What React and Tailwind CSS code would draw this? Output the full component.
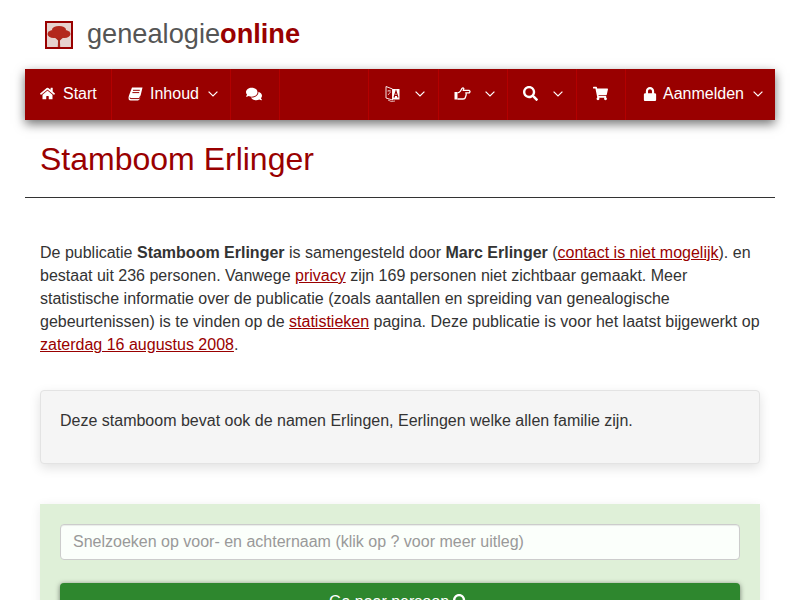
import { FaHome, FaComments, FaSearch, FaShoppingCart, FaLock } from "react-icons/fa";

const Chevron = () => (
  <svg width="10" height="6" viewBox="0 0 10 6" fill="none" stroke="currentColor" strokeWidth="1.2" className="shrink-0">
    <path d="M0.6 0.6 L5 5 L9.4 0.6" />
  </svg>
);

// translate icon: open book with an A on the right page
const LangIcon = () => (
  <svg width="15" height="18" viewBox="0 0 15 18" className="shrink-0">
    <path d="M1 1.5 L7.5 4 V15 L1 13 Z" fill="none" stroke="#fff" strokeWidth="0.9" />
    <path d="M7.5 4 H14.5 V14.5 H7.5 Z" fill="#fff" />
    <path d="M9 12.5 L11 6 L13 12.5 M9.8 10.5 H12.2" fill="none" stroke="#990000" strokeWidth="1.1" />
    <path d="M2.5 6 H6 M4 5 V6 M3 10 L5.5 7" fill="none" stroke="#fff" strokeWidth="0.7" />
    <path d="M3 15 Q6 17.5 10 16" fill="none" stroke="#fff" strokeWidth="0.7" />
  </svg>
);

const BookIcon = () => (
  <svg width="15" height="14" viewBox="0 0 15 14" className="shrink-0">
    <path d="M4 0.5 H14.5 L12 11 Q11.5 13 10 13.5 H2.5 Q0.4 13.5 0.5 11 Q0.5 10 1 8.5 Z" fill="#fff" />
    <path d="M5 3.3 H11.8 M4.4 5.6 H11.2" stroke="#990000" strokeWidth="1" />
    <path d="M12.6 8.8 L11.4 11.6 H3 Q1.8 11.6 2 10.6" fill="none" stroke="#990000" strokeWidth="1" />
  </svg>
);

const HandIcon = () => (
  <svg width="17" height="13" viewBox="0 0 17 13" className="shrink-0">
    <path d="M0.5 5 H3.5 V12.5 H0.5 Z" fill="#fff" />
    <path d="M3.5 5.8 Q5.5 5.6 6.5 4 L8 1.5 Q9 0.4 9.8 1.6 L9.3 3.4 H15 Q16.8 4.2 15.4 5.8 H12 Q12.6 8 11.6 9.6 Q11.2 12 9 12 H3.5" fill="none" stroke="#fff" strokeWidth="1.3" />
  </svg>
);

const TreeLogo = () => (
  <div className="w-[28px] h-[28px] border-2 border-[#990000] bg-[#e6d2ce] shrink-0">
    <svg width="24" height="24" viewBox="0 0 24 24" className="block blur-[0.4px]">
      <path d="M11.2 14 H12.8 L13.2 24 H10.8 Z" fill="#a5281c" />
      <path d="M8.5 15 L12 18.5 L15.5 15 Z" fill="#a5281c" />
      <ellipse cx="12" cy="6.5" rx="7" ry="3.5" fill="#b3281c" />
      <ellipse cx="6.5" cy="11" rx="6" ry="4" fill="#b3281c" />
      <ellipse cx="17.5" cy="11" rx="6" ry="4" fill="#b3281c" />
      <ellipse cx="12" cy="11" rx="8" ry="4.5" fill="#b3281c" />
    </svg>
  </div>
);

function NavItem({ className, children, last }) {
  return (
    <div className={`${className} h-full flex items-center pb-[2px] text-white ${last ? "" : "border-r border-[#b30000]"}`}>
      {children}
    </div>
  );
}

function App() {
  const linkClass = "text-[#990000] underline";
  return (
    <div className="h-screen overflow-hidden bg-white text-[#333333] font-['Liberation_Sans',Arial,sans-serif] text-base leading-[23px]">
      <div className="mx-[25px]">
        {/* Logo */}
        <div className="h-[69px] flex items-center pl-5 gap-[14px]">
          <TreeLogo />
          <div className="text-[27.2px] text-[#555555] leading-none pb-[2px]">
            genealogie<span className="font-bold text-[#990000]">online</span>
          </div>
        </div>

        {/* Nav */}
        <div className="h-[51px] bg-[#990000] flex shadow-[0_4px_10px_rgba(0,0,0,0.55)]">
          <NavItem className="w-[87px] pl-[15px] gap-2">
            <FaHome size={15} /> <span>Start</span>
          </NavItem>
          <NavItem className="w-[119px] pl-4 gap-[7px]">
            <BookIcon /> <span>Inhoud</span> <span className="ml-[2px]"><Chevron /></span>
          </NavItem>
          <NavItem className="w-[49px] pl-[15px]">
            <FaComments size={16} />
          </NavItem>
          <NavItem className="w-[89px]" />
          <NavItem className="w-[70px] pl-4 gap-[15px]">
            <LangIcon /><Chevron />
          </NavItem>
          <NavItem className="w-[69px] pl-[15px] gap-[14px]">
            <HandIcon /><Chevron />
          </NavItem>
          <NavItem className="w-[69px] pl-[15px] gap-[15px]">
            <FaSearch size={15} /><Chevron />
          </NavItem>
          <NavItem className="w-[49px] pl-4">
            <FaShoppingCart size={15} />
          </NavItem>
          <NavItem className="flex-1 pl-[17px] gap-[6px]" last>
            <FaLock size={14} /> <span>Aanmelden</span> <span className="ml-[3px]"><Chevron /></span>
          </NavItem>
        </div>

        {/* Title */}
        <h1 className="text-[32px] leading-[35px] text-[#990000] pl-[15px] pt-[22px] pb-[20px] border-b border-[#333333]">
          Stamboom Erlinger
        </h1>

        {/* Intro */}
        <p className="px-[15px] mt-[43px]">
          De publicatie <b>Stamboom Erlinger</b> is samengesteld door <b>Marc Erlinger</b> (<a className={linkClass}>contact is niet mogelijk</a>). en bestaat uit 236 personen. Vanwege <a className={linkClass}>privacy</a> zijn 169 personen niet zichtbaar gemaakt. Meer statistische informatie over de publicatie (zoals aantallen en spreiding van genealogische gebeurtenissen) is te vinden op de <a className={linkClass}>statistieken</a> pagina. Deze publicatie is voor het laatst bijgewerkt op <a className={linkClass}>zaterdag 16 augustus 2008</a>.
        </p>

        {/* Note */}
        <div className="mx-[15px] mt-[34px] h-[74px] bg-[#f5f5f5] border border-[#e3e3e3] rounded px-[19px] pt-[18px] shadow-[0_4px_12px_rgba(0,0,0,0.12)]">
          Deze stamboom bevat ook de namen Erlingen, Eerlingen welke allen familie zijn.
        </div>

        {/* Search */}
        <div className="mx-[15px] mt-[40px] bg-[#dff0d8] px-5 pt-5 pb-5 shadow-[0_2px_10px_rgba(0,0,0,0.08)]">
          <input
            placeholder="Snelzoeken op voor- en achternaam (klik op ? voor meer uitleg)"
            className="w-full h-[36px] bg-[#fbfffb] border border-[#cccccc] rounded px-3 text-base text-[#555555] placeholder:text-[#999999] shadow-[inset_0_1px_1px_rgba(0,0,0,0.075)] block"
          />
          <button className="mt-[23px] w-full h-[36px] pr-[3px] bg-[#2e872e] rounded text-white flex items-center justify-center gap-1 shadow-[0_1px_5px_rgba(0,0,0,0.5)]">
            Ga naar persoon <FaSearch size={15} />
          </button>
        </div>
      </div>
    </div>
  );
}

export default App;
